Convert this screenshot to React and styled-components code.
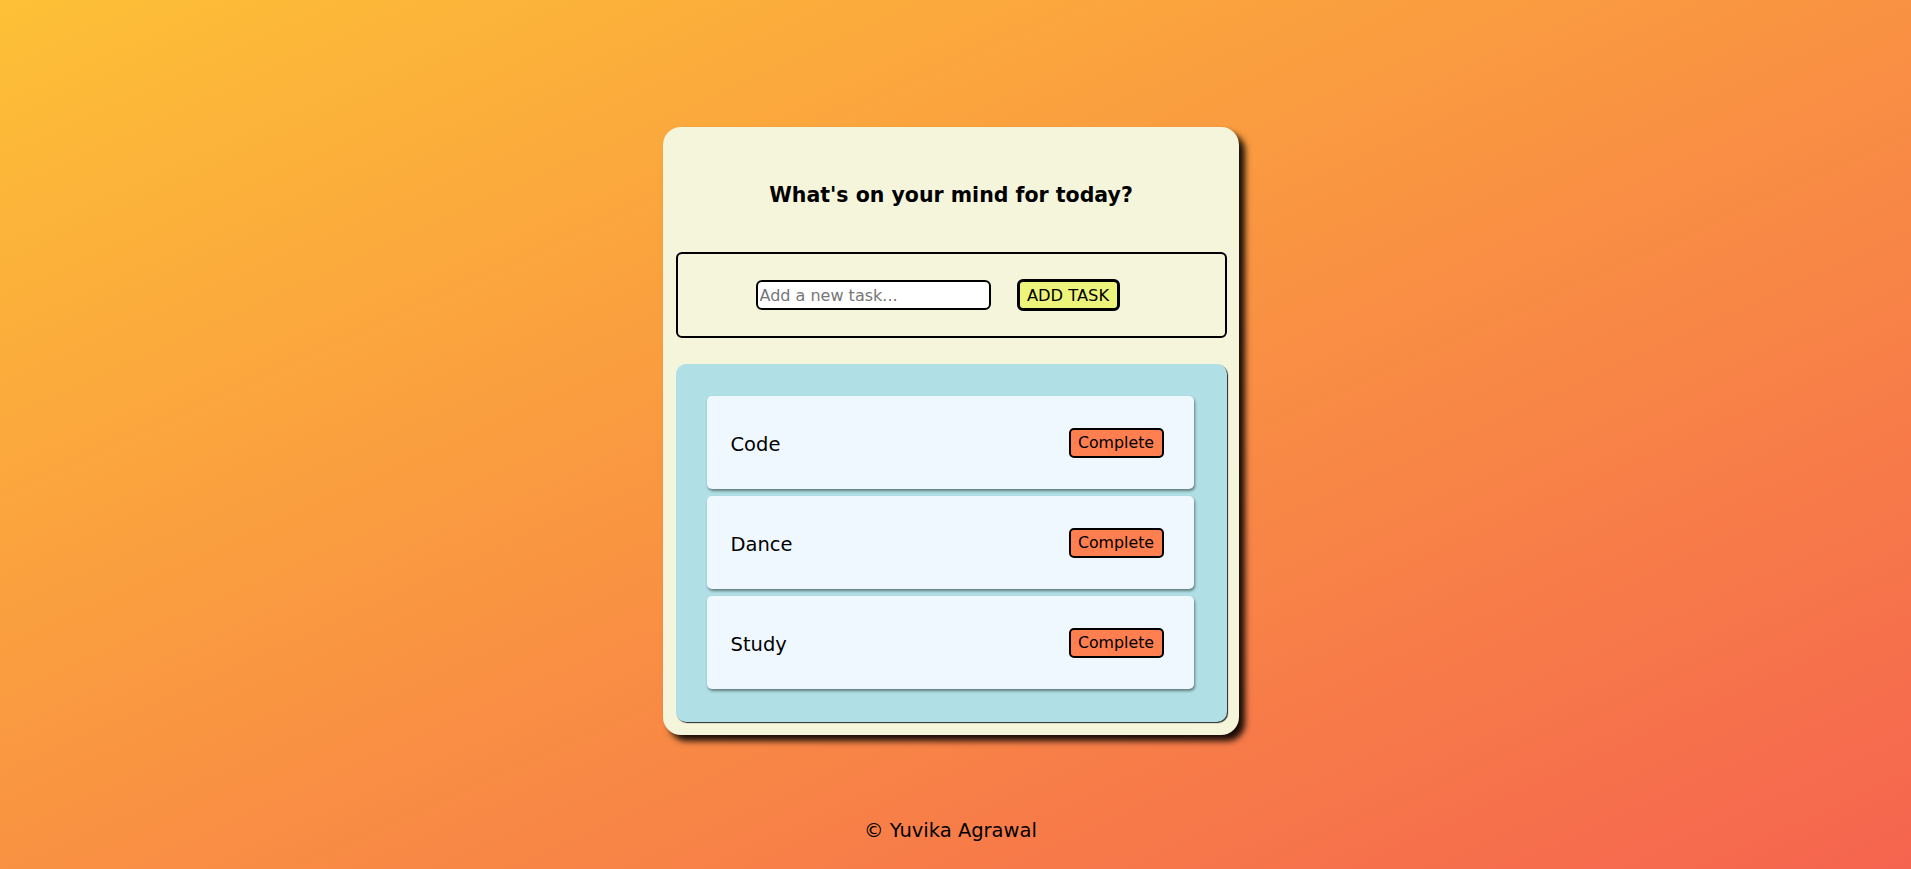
import React from 'react';
import styled, { createGlobalStyle } from 'styled-components';

const GlobalStyle = createGlobalStyle`
  html, body {
    margin: 0;
    padding: 0;
  }
  body {
    font-family: "DejaVu Sans", Verdana, sans-serif;
    color: #000;
    min-height: 100vh;
    background: linear-gradient(to bottom right, #fdc036, #f5644f);
  }
`;

const Page = styled.div`
  min-height: 100vh;
  display: flex;
  flex-direction: column;
  align-items: center;
  padding: 127px 10px 0 0;
  box-sizing: border-box;
`;

const Card = styled.div`
  width: 576px;
  box-sizing: border-box;
  background: #f5f5dc;
  border-radius: 18px;
  box-shadow: 6px 6px 6px rgba(0, 0, 0, 0.9);
  padding: 0 12px 13px 13px;
  display: flex;
  flex-direction: column;
`;

const Title = styled.h2`
  margin: 56px 0 45px;
  font-size: 20.5px;
  line-height: 24px;
  font-weight: bold;
  text-align: center;
`;

const TaskForm = styled.form`
  height: 86px;
  box-sizing: border-box;
  border: 2px solid #000;
  border-radius: 6px;
  display: flex;
  align-items: center;
  gap: 26px;
  padding-left: 78px;
  margin-bottom: 26px;
`;

const TaskInput = styled.input`
  width: 235px;
  height: 30px;
  box-sizing: border-box;
  border: 2px solid #000;
  border-radius: 6px;
  background: #fff;
  padding: 0 2px;
  font-family: "DejaVu Sans", sans-serif;
  font-size: 16px;
  outline: none;

  &::placeholder {
    color: #767676;
  }
`;

const AddButton = styled.button`
  width: 103px;
  height: 32px;
  box-sizing: border-box;
  border: 3px solid #000;
  border-radius: 6px;
  background: #edf47a;
  font-family: "DejaVu Sans", sans-serif;
  font-size: 16.3px;
  color: #000;
  padding: 0;
  cursor: pointer;
`;

const TaskPanel = styled.div`
  background: #b0e0e6;
  border-radius: 10px;
  box-shadow: 1px 1px 1px rgba(0, 0, 0, 0.85);
  padding: 32px 33px 33px 31px;
  display: flex;
  flex-direction: column;
  gap: 7px;
`;

const TaskItem = styled.div`
  height: 93px;
  box-sizing: border-box;
  background: #f0f8ff;
  border-radius: 5px;
  box-shadow: 1px 2px 3px rgba(0, 0, 0, 0.45);
  display: flex;
  align-items: center;
  justify-content: space-between;
  padding: 0 30px 0 24px;
`;

const TaskName = styled.span`
  font-size: 19.5px;
  padding-top: 4px;
`;

const CompleteButton = styled.button`
  width: 95px;
  height: 30px;
  box-sizing: border-box;
  border: 2px solid #000;
  border-radius: 5px;
  background: #ff7f50;
  font-family: "DejaVu Sans", sans-serif;
  font-size: 15.8px;
  color: #000;
  padding: 0;
  cursor: pointer;
`;

const Footer = styled.footer`
  margin-top: 84px;
  font-size: 19.5px;
  line-height: 24px;
`;

const tasks = ['Code', 'Dance', 'Study'];

const App = () => {
  return (
    <>
      <GlobalStyle />
      <Page>
        <Card>
          <Title>What's on your mind for today?</Title>
          <TaskForm onSubmit={(e) => e.preventDefault()}>
            <TaskInput type="text" placeholder="Add a new task..." />
            <AddButton type="submit">ADD TASK</AddButton>
          </TaskForm>
          <TaskPanel>
            {tasks.map((task) => (
              <TaskItem key={task}>
                <TaskName>{task}</TaskName>
                <CompleteButton>Complete</CompleteButton>
              </TaskItem>
            ))}
          </TaskPanel>
        </Card>
        <Footer>© Yuvika Agrawal</Footer>
      </Page>
    </>
  );
};

export default App;
